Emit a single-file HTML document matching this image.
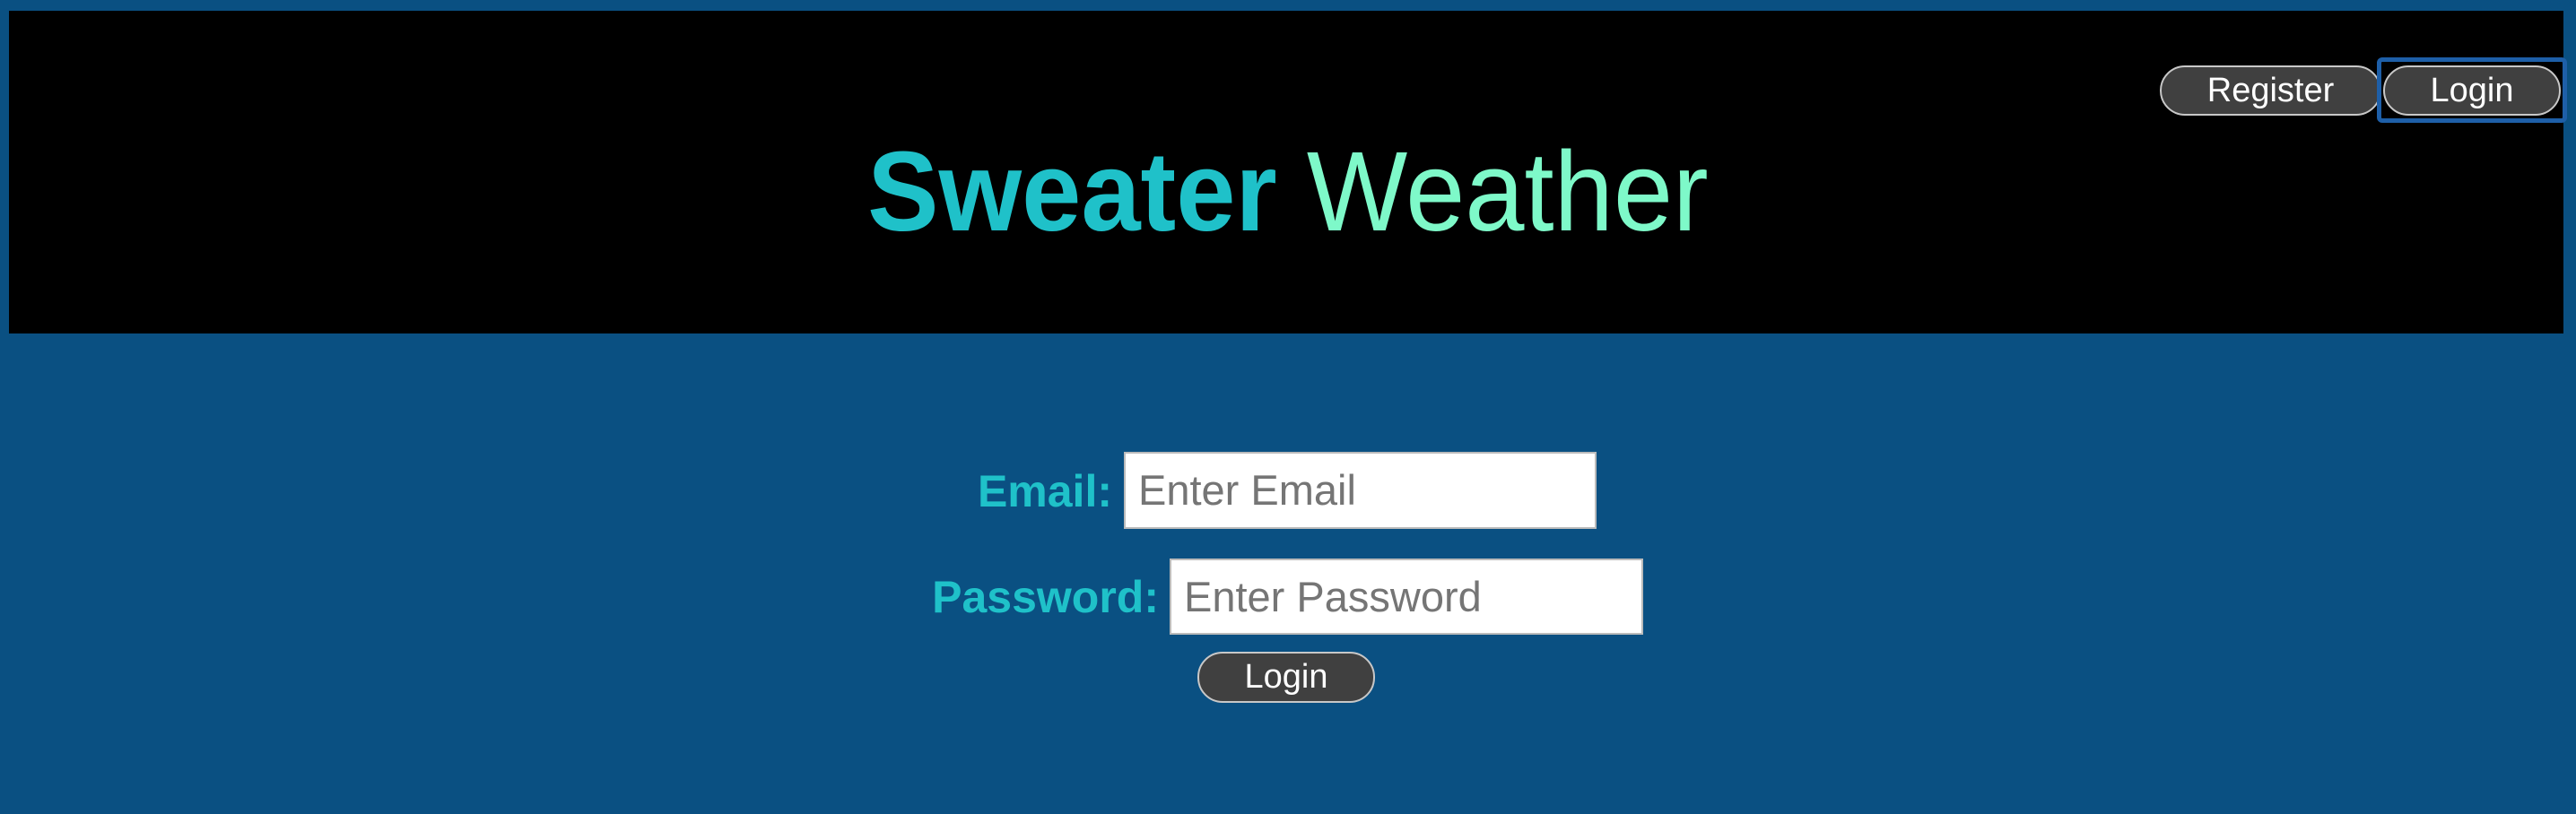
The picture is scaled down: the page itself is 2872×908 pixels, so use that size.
<!DOCTYPE html>
<html><head><meta charset="utf-8"><style>
html,body{margin:0;padding:0;}
body{width:2872px;height:908px;background:#0a5082;position:relative;overflow:hidden;font-family:"Liberation Sans",Arial,sans-serif;}
.hdr{position:absolute;left:10px;top:12px;width:2848px;height:360px;background:#000;}
.title{position:absolute;left:0;width:2872px;top:139px;text-align:center;font-size:126px;line-height:150px;white-space:nowrap;transform:scaleX(0.945);transform-origin:1434px 0;}
.title b{color:#1fc1c9;font-weight:700;}
.title span{color:#7ef9c9;font-weight:400;}
.btn{position:absolute;box-sizing:border-box;background:#404040;border:2px solid #c8c8c8;border-radius:28px;color:#fff;font-size:38px;text-align:center;}
.lbl{position:absolute;color:#1fc1c9;font-weight:700;font-size:50px;text-align:right;}
.inp{position:absolute;box-sizing:border-box;background:#fff;border:2px solid #bbb;color:#757575;font-size:47px;padding-left:14px;}
</style></head><body>
<div class="hdr"></div>
<div class="title"><b>Sweater</b> <span>Weather</span></div>
<div class="btn" style="left:2408px;top:73px;width:247px;height:56px;line-height:52px;">Register</div>
<div style="position:absolute;left:2650px;top:64px;width:212px;height:73px;box-sizing:border-box;border:5px solid #1e5fa8;border-radius:6px;"></div>
<div class="btn" style="left:2657px;top:73px;width:198px;height:56px;line-height:52px;">Login</div>
<div class="lbl" style="left:900px;width:340px;top:518px;line-height:60px;">Email:</div>
<div class="inp" style="left:1253px;top:504px;width:527px;height:86px;line-height:82px;">Enter Email</div>
<div class="lbl" style="left:900px;width:392px;top:636px;line-height:60px;">Password:</div>
<div class="inp" style="left:1304px;top:623px;width:528px;height:85px;line-height:81px;">Enter Password</div>
<div class="btn" style="left:1335px;top:727px;width:198px;height:57px;line-height:53px;">Login</div>
</body></html>
